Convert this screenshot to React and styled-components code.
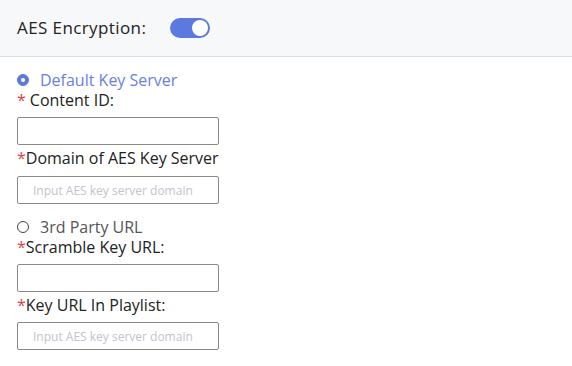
import React, { useState } from "react";
import styled, { createGlobalStyle } from "styled-components";

const Global = createGlobalStyle`
  html, body { margin: 0; padding: 0; background: #fff; }
  body { font-family: "Open Sans", "Noto Sans", sans-serif; }
  * { box-sizing: border-box; }
`;

const Page = styled.div`
  width: 572px;
  height: 366px;
  background: #fff;
`;

const Header = styled.div`
  height: 57px;
  background: #f7f8fa;
  border-bottom: 1px solid #dcdde0;
  display: flex;
  align-items: center;
  padding: 0 17px 1px;
  gap: 24px;
`;

const Title = styled.span`
  font-size: 17px;
  color: #222;
  letter-spacing: 0.4px;
`;

const Switch = styled.span`
  width: 40px;
  height: 20px;
  border-radius: 10px;
  background: ${(p) => (p.on ? "#5b79de" : "#dcdfe6")};
  position: relative;
  display: inline-block;
  cursor: pointer;
  &::after {
    content: "";
    position: absolute;
    top: 2px;
    left: ${(p) => (p.on ? "22px" : "2px")};
    width: 16px;
    height: 16px;
    border-radius: 50%;
    background: #fff;
  }
`;

const Body = styled.div`
  padding: 13px 17px 0;
  display: flex;
  flex-direction: column;
`;

const RadioRow = styled.label`
  display: flex;
  align-items: center;
  gap: 11px;
  height: 20px;
  line-height: 20px;
  font-size: 16px;
  color: ${(p) => (p.checked ? "#6a7fdf" : "#555")};
  cursor: pointer;
`;

const RadioDot = styled.span`
  flex: none;
  width: 12px;
  height: 12px;
  border-radius: 50%;
  border: 1px solid ${(p) => (p.checked ? "#5b79de" : "#444")};
  background: ${(p) => (p.checked ? "#5b79de" : "#fff")};
  position: relative;
  &::after {
    content: "";
    display: ${(p) => (p.checked ? "block" : "none")};
    position: absolute;
    width: 4px;
    height: 4px;
    border-radius: 50%;
    background: #fff;
    top: 3px;
    left: 3px;
  }
`;

const Label = styled.div`
  font-size: 16px;
  color: #222;
  height: 20px;
  line-height: 20px;
`;

const Star = styled.span`
  color: #e0414d;
  margin-right: ${(p) => (p.gap ? "4px" : "0")};
`;

const Input = styled.input`
  width: 202px;
  height: 28px;
  border: 1px solid #8a8a8a;
  border-radius: 2px;
  padding: 0 15px;
  font-family: inherit;
  font-size: 12px;
  color: #333;
  outline: none;
  margin: ${(p) => p.m || "0"};
  &::placeholder { color: #c0c4cc; }
`;

export default function App() {
  const [on, setOn] = useState(true);
  const [mode, setMode] = useState("default");
  return (
    <Page>
      <Global />
      <Header>
        <Title>AES Encryption:</Title>
        <Switch on={on ? 1 : 0} onClick={() => setOn(!on)} />
      </Header>
      <Body>
        <RadioRow checked={mode === "default"} onClick={() => setMode("default")}>
          <RadioDot checked={mode === "default"} />
          Default Key Server
        </RadioRow>
        <Label><Star gap={1}>*</Star>Content ID:</Label>
        <Input m="7px 0 3px" />
        <Label><Star>*</Star>Domain of AES Key Server</Label>
        <Input m="8px 0 13px" placeholder="Input AES key server domain" />
        <RadioRow checked={mode === "third"} onClick={() => setMode("third")}>
          <RadioDot checked={mode === "third"} />
          3rd Party URL
        </RadioRow>
        <Label><Star>*</Star>Scramble Key URL:</Label>
        <Input m="7px 0 3px" />
        <Label><Star>*</Star>Key URL In Playlist:</Label>
        <Input m="7px 0 0" placeholder="Input AES key server domain" />
      </Body>
    </Page>
  );
}
